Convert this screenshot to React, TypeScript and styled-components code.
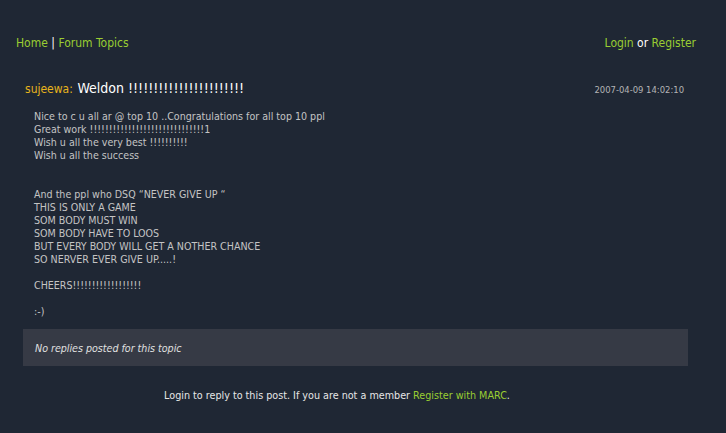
import React from "react";
import styled, { createGlobalStyle } from "styled-components";

const Global = createGlobalStyle`
  html, body { margin: 0; padding: 0; background: #1f2734; }
  body { font-family: "DejaVu Sans Condensed", "DejaVu Sans", sans-serif; }
`;

const Page = styled.div`
  width: 726px;
  min-height: 433px;
  box-sizing: border-box;
  padding: 35px 30px 0 16px;
  color: #c8c8c8;
`;

const TopBar = styled.div`
  display: flex;
  justify-content: space-between;
  align-items: center;
  font-size: 12px;
  line-height: 16px;
  color: #ffffff;
`;

const Link = styled.a`
  color: #9acd32;
  text-decoration: none;
`;

const Post = styled.div`
  margin-top: 27px;
  padding: 0 12px 0 9px;
`;

const PostHead = styled.div`
  display: flex;
  justify-content: space-between;
  align-items: baseline;
`;

const Author = styled.span`
  color: #e8b41c;
  font-size: 12px;
`;

const Title = styled.span`
  color: #ffffff;
  font-size: 14px;
`;

const Stamp = styled.span`
  font-size: 9.4px;
  color: #b4b4b4;
`;

const Body = styled.div`
  margin-top: 13px;
  padding-left: 9px;
  font-size: 10.6px;
  line-height: 13px;
  color: #c4c4c4;
  white-space: pre-wrap;
`;

const Replies = styled.div`
  margin: 11px 8px 0 7px;
  height: 37px;
  display: flex;
  align-items: center;
  padding-left: 12px;
  background: #363a45;
  font-size: 10.6px;
  font-style: italic;
  color: #e0e0e0;
`;

const Footer = styled.div`
  margin-top: 23px;
  padding-right: 38px;
  text-align: center;
  font-size: 10.7px;
  color: #e6e6e6;
`;

const text = `Nice to c u all ar @ top 10 ..Congratulations for all top 10 ppl
Great work !!!!!!!!!!!!!!!!!!!!!!!!!!!!!!1
Wish u all the very best !!!!!!!!!!
Wish u all the success


And the ppl who DSQ “NEVER GIVE UP “
THIS IS ONLY A GAME
SOM BODY MUST WIN
SOM BODY HAVE TO LOOS
BUT EVERY BODY WILL GET A NOTHER CHANCE
SO NERVER EVER GIVE UP.....!

CHEERS!!!!!!!!!!!!!!!!!!

:-)`;

export default function App() {
  return (
    <>
      <Global />
      <Page>
        <TopBar>
          <span>
            <Link href="#">Home</Link> | <Link href="#">Forum Topics</Link>
          </span>
          <span>
            <Link href="#">Login</Link> or <Link href="#">Register</Link>
          </span>
        </TopBar>
        <Post>
          <PostHead>
            <span>
              <Author>sujeewa:</Author> <Title>Weldon !!!!!!!!!!!!!!!!!!!!!!!</Title>
            </span>
            <Stamp>2007-04-09 14:02:10</Stamp>
          </PostHead>
          <Body>{text}</Body>
        </Post>
        <Replies>No replies posted for this topic</Replies>
        <Footer>
          Login to reply to this post. If you are not a member <Link href="#">Register with MARC</Link>.
        </Footer>
      </Page>
    </>
  );
}
